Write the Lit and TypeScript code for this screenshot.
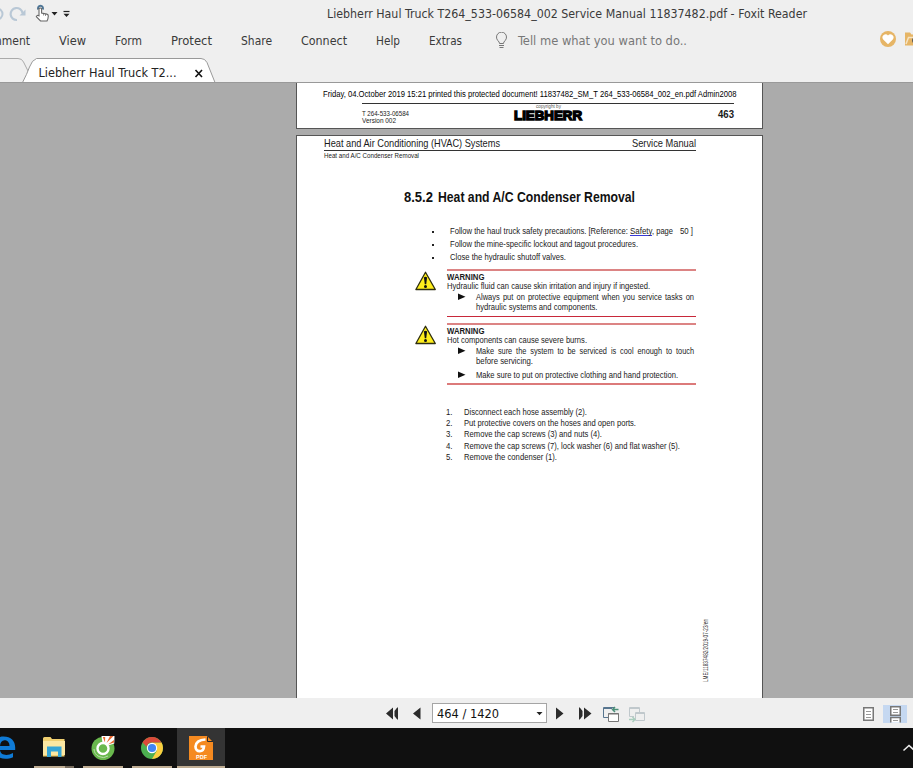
import { LitElement, html, svg, css } from "lit";
import { customElement } from "lit/decorators.js";

/** One line of text fitted to a width, with its baseline inside a box of height h. */
const line = (text: string, w: number, h: number, base: number, cls: string) => html`
  <svg class="line" width=${w} height=${h}>
    <text class=${cls} x="0" y=${base} textLength=${w} lengthAdjust="spacingAndGlyphs">${text}</text>
  </svg>`;

const MENU: [string, number][] = [
  ["View", 27], ["Form", 27], ["Protect", 41], ["Share", 31], ["Connect", 46], ["Help", 24], ["Extras", 33],
];

const STEPS: [string, number][] = [
  ["Disconnect each hose assembly (2).", 123],
  ["Put protective covers on the hoses and open ports.", 172],
  ["Remove the cap screws (3) and nuts (4).", 138],
  ["Remove the cap screws (7), lock washer (6) and flat washer (5).", 216],
  ["Remove the condenser (1).", 93],
];

const sheet = (stroke: string) => svg`
  <path d="M.75 .75h9.5v12.5H.75z" fill="#fff" stroke=${stroke} stroke-width="1.5"/>
  <path d="M3 4.500h5M3 7.500h5M3 10.500h5" stroke="#999" stroke-width="1"/>`;

@customElement("app-ribbon")
class AppRibbon extends LitElement {
  static styles = css`
    :host { display: flex; flex-direction: column; height: 82px; background: #efefef; overflow: hidden; }
    .line { display: block; overflow: visible; flex: none; }
    text { font-family: "DejaVu Sans Condensed", "DejaVu Sans", sans-serif; font-stretch: condensed; font-size: 12.2px; fill: #3a3a3a; }
    .hint { fill: #777; }
    .tabtext { fill: #222; }
    .title { display: flex; height: 27px; }
    .quick { width: 327px; display: block; flex: none; }
    .menu { display: flex; height: 31px; }
    .comment { width: 59px; display: flex; justify-content: flex-end; padding-right: 29px; box-sizing: border-box; flex: none; }
    .items { display: flex; gap: 29px; }
    .bulb { margin: 5px 10px 0 33px; flex: none; }
    .badges { margin-left: auto; flex: none; }
    .tabs { display: flex; height: 24px; background: none; }
    .tabs svg { display: block; }
  `;
  render() {
    return html`
      <div class="title">
        <svg class="quick" width="327" height="27" fill="none">
          <path d="M-3 8.500a5 5 0 0 1 0 11" stroke="#b9c8d6" stroke-width="2"/>
          <path d="M17 20a6 6 0 1 1 5.500-7" stroke="#b9c8d6" stroke-width="2.200"/>
          <path d="M25.500 9.500v6h-6z" fill="#b9c8d6"/>
          <path d="M38.300 9.500a2.500 2.500 0 1 1 4.400 0" stroke="#4f7595" stroke-width="2"/>
          <path d="M39 15.800V8.700q1.300-1.500 2.600 0V13l5.200 1.100q1.500.4 1.500 1.900-.1 2.800-1.300 5H40.500l-4.200-4.400q.8-1.900 2.700-.8z" fill="#fff" stroke="#666" stroke-width="1.100"/>
          <path d="M43.500 13.500v2M45.500 14v2" stroke="#666" stroke-width=".7"/>
          <path d="M51.500 12h6l-3 3.400zM63.500 13.700h6l-3 3.300z" fill="#222"/>
          <path d="M63.500 11.500h6" stroke="#222" stroke-width="1.200"/>
        </svg>
        ${line("Liebherr Haul Truck T264_533-06584_002 Service Manual 11837482.pdf - Foxit Reader", 480, 27, 18, "")}
      </div>
      <div class="menu">
        <div class="comment">${line("Comment", 53, 31, 18, "")}</div>
        <div class="items">${MENU.map(([m, w]) => line(m, w, 31, 18, ""))}</div>
        <svg class="bulb" width="13" height="18" fill="none" stroke="#777">
          <path d="M4.500 11.500q0-1.500-1.700-3A5 5 0 1 1 10.200 8.500q-1.700 1.500-1.700 3zM4 13.500h5M4.500 15.500h4"/>
        </svg>
        ${line("Tell me what you want to do..", 169, 31, 18, "hint")}
        <svg class="badges" width="33" height="31">
          <circle cx="8" cy="12" r="8" fill="#e6b566"/>
          <path d="M8 17.200L3.200 12.400a2.900 2.900 0 0 1 4.800-3.800 2.900 2.900 0 0 1 4.800 3.800z" fill="#fff"/>
          <path d="M25 5.500h5l1.500 2H33v11h-8z" fill="#e6b566"/>
          <path d="M26 17l2.500-6.500H33" fill="none" stroke="#f6e3c2" stroke-width="1.500"/>
          <path d="M34 11a3 3 0 0 0 0 5" fill="none" stroke="#555" stroke-width="1.200"/>
        </svg>
      </div>
      <div class="tabs">
        <svg width="230" height="24">
          <path d="M-1 .5H18q4 0 5.500 3.500l4.500 9" fill="none" stroke="#aaa"/>
          <path d="M22.500 24.500Q27 16 29.500 9T36.500 .5H201q4 0 6 4l8 20z" fill="#fff" stroke="#999"/>
          <text class="tabtext" x="38.500" y="19" textLength="138" lengthAdjust="spacingAndGlyphs">Liebherr Haul Truck T2...</text>
          <path d="M195.500 12l6.500 7M202 12l-6.500 7" stroke="#111" stroke-width="1.600"/>
        </svg>
      </div>`;
  }
}

@customElement("warning-box")
class WarningBox extends LitElement {
  static styles = css`
    :host { display: grid; grid-template-columns: 32px 249px; }
    .sign { display: block; margin-top: 2px; }
    .body { border-top: 2px solid #dc8484; border-bottom: 1px solid #c8283a; display: flex; flex-direction: column; }
    .soft { border-bottom: 2px solid #dc7a7a; }
  `;
  static properties = { soft: { type: Boolean } };
  declare soft: boolean;
  render() {
    return html`
      <svg class="sign" width="22" height="20">
        <path d="M10.500 1.200L20.300 18.500H.9z" fill="#ffee1c" stroke="#2e2e10" stroke-width="1.300" stroke-linejoin="round"/>
        <path d="M8.900 6.500q1.600-1.600 3.200 0L11.200 13.200H9.800z" fill="#111"/>
        <circle cx="10.500" cy="15.500" r="1.500" fill="#111"/>
      </svg>
      <div class="body ${this.soft ? "soft" : ""}"><slot></slot></div>`;
  }
}

@customElement("document-view")
class DocumentView extends LitElement {
  static styles = css`
    :host { display: flex; flex-direction: column; align-items: flex-start; height: 616px; overflow: hidden;
      background: #ababab; padding-left: 296px; box-sizing: border-box; border-top: 1px solid #999; }
    .line { display: block; overflow: visible; flex: none; }
    text { font-family: "Liberation Sans", Arial, sans-serif; fill: #1a1a1a; }
    .s5 { font-size: 5.500px; fill: #555; }
    .s7 { font-size: 8px; fill: #222; }
    .s8 { font-size: 8.600px; }
    .wide { word-spacing: 1.200px; }
    .wider { word-spacing: 2.200px; }
    .b8 { font-size: 8.800px; font-weight: 700; }
    .s9 { font-size: 9.200px; fill: #000; }
    .s10 { font-size: 10.700px; }
    .b10 { font-size: 10px; font-weight: 700; }
    .b13 { font-size: 14px; font-weight: 700; fill: #111; }
    .logo { font-size: 13.400px; font-weight: 700; fill: #000; stroke: #000; stroke-width: 1.400px; }
    .page { width: 467px; box-sizing: border-box; background: #fff; border: 1px solid #555; flex: none; }
    .first { height: 46px; border-top: 0; }
    .second { height: 580px; margin-top: 6px; }
    .stamp { padding-left: 25.500px; height: 20px; }
    .foot { margin-left: 65px; width: 372px; border-top: 1px solid #333; display: flex; justify-content: space-between; }
    .version { width: 152px; padding-top: 4px; box-sizing: border-box; }
    .brand { width: 68px; }
    .brand .mini { padding-left: 22px; height: 5px; }
    .number { width: 152px; display: flex; justify-content: flex-end; }
    .head { margin-left: 27px; width: 372px; height: 14px; display: flex; justify-content: space-between; border-bottom: 1px solid #333; }
    .sub { margin-left: 27px; height: 36px; }
    h1 { margin: 0 0 0 106.500px; display: flex; gap: 5.500px; height: 38px; font-size: 13px; }
    .bullets { height: 44px; padding-left: 135px; display: flex; flex-direction: column; }
    .bullet { display: flex; height: 13px; }
    .dot { width: 2px; height: 2px; background: #222; margin: 6px 16px 0 0; flex: none; }
    .link { height: 10px; margin-left: 1.500px; border-bottom: 1px solid #3a3ad8; }
    .gap { width: 6.500px; }
    .warnings { padding-left: 118px; display: flex; flex-direction: column; gap: 6px; }
    .point { display: flex; padding-left: 11px; }
    .arrow { margin-right: 10.500px; }
    .last { margin-top: 4px; }
    .steps { margin: 20.500px 0 0 149px; display: flex; flex-direction: column; }
    .step { display: flex; gap: 11.500px; height: 11.400px; }
    .imprint { display: block; margin: 156px 0 0 402.500px; }
    .tiny { font-size: 7px; fill: #333; }
  `;
  private point(rows: [string, number][], h: number[], cls = "") {
    return html`<div class="point">
      <svg class="arrow" width="7.500" height="10"><path d="M0 2.500l7.500 3.200L0 9z" fill="#111"/></svg>
      <div>${rows.map(([t, w], i) => line(t, w, h[i], 8.5, i === 0 ? "s8 " + cls : "s8"))}</div>
    </div>`;
  }
  render() {
    return html`
      <div class="page first">
        <div class="stamp">${line("Friday, 04.October 2019 15:21 printed this protected document! 11837482_SM_T 264_533-06584_002_en.pdf Admin2008", 413.5, 20, 14, "s9")}</div>
        <div class="foot">
          <div class="version">
            ${line("T 264-533-06584", 47, 7, 8, "s7")}
            ${line("Version 002", 34, 7, 8, "s7")}
          </div>
          <div class="brand">
            <div class="mini">${line("copyright by", 25, 5, 4, "s5")}</div>
            ${line("LIEBHERR", 68, 14, 10.5, "logo")}
          </div>
          <div class="number">${line("463", 16, 18, 14, "b10")}</div>
        </div>
      </div>
      <div class="page second">
        <div class="head">
          ${line("Heat and Air Conditioning (HVAC) Systems", 176, 14, 11, "s10")}
          ${line("Service Manual", 64, 14, 11.4, "s10")}
        </div>
        <div class="sub">${line("Heat and A/C Condenser Removal", 95, 12, 7, "s7")}</div>
        <h1>
          ${line("8.5.2", 29, 38, 15, "b13")}
          ${line("Heat and A/C Condenser Removal", 197, 38, 15, "b13")}
        </h1>
        <div class="bullets">
          <div class="bullet"><i class="dot"></i>
            ${line("Follow the haul truck safety precautions. [Reference:", 178, 13, 9, "s8")}
            <div class="link">${line("Safety", 22.5, 10, 9, "s8")}</div>
            ${line(", page", 21, 13, 9, "s8")}
            <span class="gap"></span>
            ${line("50 ]", 13, 13, 9, "s8")}
          </div>
          <div class="bullet"><i class="dot"></i>${line("Follow the mine-specific lockout and tagout procedures.", 188, 13, 9, "s8")}</div>
          <div class="bullet"><i class="dot"></i>${line("Close the hydraulic shutoff valves.", 116, 13, 9, "s8")}</div>
        </div>
        <div class="warnings">
          <warning-box>
            ${line("WARNING", 37.5, 10, 8.7, "b8")}
            ${line("Hydraulic fluid can cause skin irritation and injury if ingested.", 203, 10, 8.3, "s8")}
            ${this.point([["Always put on protective equipment when you service tasks on", 218], ["hydraulic systems and components.", 121.5]], [9.5, 15.5], "wide")}
          </warning-box>
          <warning-box soft>
            ${line("WARNING", 37.5, 10, 8.7, "b8")}
            ${line("Hot components can cause severe burns.", 140, 10, 8.3, "s8")}
            ${this.point([["Make sure the system to be serviced is cool enough to touch", 218], ["before servicing.", 57]], [9.5, 10], "wider")}
            <div class="last">${this.point([["Make sure to put on protective clothing and hand protection.", 202]], [14.5])}</div>
          </warning-box>
        </div>
        <div class="steps">
          ${STEPS.map(([t, w], i) => html`<div class="step">${line(`${i + 1}.`, 6.5, 11, 9, "s8")}${line(t, w, 11, 9, "s8")}</div>`)}
        </div>
        <svg class="imprint" width="10" height="66">
          <text class="tiny" transform="translate(7.500 64) rotate(-90)" textLength="63" lengthAdjust="spacingAndGlyphs">LME/11837482/2019-07-23/en</text>
        </svg>
      </div>`;
  }
}

@customElement("page-bar")
class PageBar extends LitElement {
  static styles = css`
    :host { display: flex; height: 30px; background: #efefef; align-items: flex-start; }
    svg { display: block; flex: none; }
    text { font-family: "DejaVu Sans Condensed", "DejaVu Sans", sans-serif; font-size: 12.200px; fill: #111; }
    .back { margin-left: 386px; margin-top: 9px; width: 46px; }
    .field { margin-top: 5px; width: 115px; height: 20px; box-sizing: border-box; border: 1px solid #a5a5a5; background: #fff; display: flex; justify-content: space-between; }
    .no { margin-left: 4px; }
    .forward { margin: 7px 0 0 8px; }
    .views { margin-left: auto; display: flex; padding-right: 6px; margin-top: 7px; gap: 9px; }
    .lone { margin-top: 2px; }
    .active { background: #c5d8f1; width: 24px; height: 18px; display: flex; justify-content: center; }
  `;
  render() {
    return html`
      <svg class="back" height="13" fill="#2b2b2b">
        <path d="M7 .5v12L0 6.500zM12 .5v12h-.8L8.500 9V4L11.200 .5zM34.500 .5v12L27 6.500z"/>
      </svg>
      <div class="field">
        <svg class="no" width="64" height="18"><text x="0" y="14" textLength="62" lengthAdjust="spacingAndGlyphs">464 / 1420</text></svg>
        <svg width="12" height="18"><path d="M2.500 8h6l-3 3.300z" fill="#222"/></svg>
      </div>
      <svg class="forward" width="92" height="18" fill="none">
        <path d="M1 2.500v12l7.500-6zM29 2.500v12l7.500-6zM24 2.500v12h.8L27.500 11V6L24.800 2.500z" fill="#2b2b2b"/>
        <path d="M59 2.500H48.500v10H53M48 3.500h9" stroke="#57758f"/>
        <path d="M53.500 8.500h10v8h-10zM53 9h11" stroke="#777" fill="#fff"/>
        <path d="M63.500 4.500h-6M60 2l-2.500 2.500L60 7" stroke="#4b8f78" stroke-width="1.500"/>
        <path d="M79 11.500h-4.500v-9h10V7M74 3.500h11M80.500 7.500h9v8h-9zM80 8.500h10" stroke="#c0c8cc"/>
        <path d="M74 14.500h6M77.500 12l2.500 2.500L77.500 17" stroke="#a9cdbd" stroke-width="1.400"/>
      </svg>
      <div class="views">
        <svg class="lone" width="11" height="14">${sheet("#777")}</svg>
        <div class="active">
          <svg width="11" height="18" fill="#fff" stroke="#777" stroke-width="1.500">
            <path d="M.75 1.750h9.500v8.500H.75zM.75 17.500v-5h9.500v5"/>
            <path d="M3 4.500h5M3 7.500h5M3 15.500h5" stroke="#999" stroke-width="1"/>
          </svg>
        </div>
      </div>`;
  }
}

@customElement("task-bar")
class TaskBar extends LitElement {
  static styles = css`
    :host { display: flex; height: 40px; background: #101010; overflow: hidden; }
    svg { display: block; flex: none; }
    .edge { width: 34px; }
    .app { width: 40px; height: 40px; margin-right: 9px; box-sizing: border-box; border-bottom: 2px solid #bfad93; display: flex; justify-content: center; }
    .chrome { margin-right: 5px; }
    .open { width: 48px; background: #343434; margin: 0; }
    .tray { margin-left: auto; }
    .pdf { font-family: "Liberation Sans", sans-serif; font-weight: 700; font-size: 5.500px; fill: #fff; }
  `;
  render() {
    return html`
      <svg class="edge" height="40">
        <path d="M-8 18C-7 11-2 8.500 3.500 8.500 11 8.500 15.200 13 15.200 19.500V22H0C.3 27 7 28.500 13 25v4.300C4 33 -5 30-5 21.500-5 17-2 14-1 13.500-4 14-6.500 16-8 18zM0 18H9.500C9.500 14 7 12.300 4.500 12.300 2 12.300.3 14.500 0 18z" fill="#0f7bd6" fill-rule="evenodd"/>
      </svg>
      <div class="app">
        <svg width="40" height="40">
          <path d="M9 12V10.500q0-1.500 1.500-1.500h6l1.500 2H30.500v17.500H9z" fill="#f0cf70"/>
          <path d="M9 13h22v14H9z" fill="#fbe7a2"/>
          <path d="M13 18.500h14.500V29H24v-5.500h-7V29h-4z" fill="#35a5d6"/>
          <path d="M31 38h9v2h-9z" fill="#766b5d"/>
        </svg>
      </div>
      <div class="app">
        <svg width="24" height="40">
          <circle cx="12" cy="20.500" r="11.500" fill="#69b84d"/>
          <path d="M12 19L10.500 8h13v7.500z" fill="#fff"/>
          <path d="M23.500 15.500L24 8v8z" fill="#101010"/>
          <path d="M14 14.500L11.800 9h2.400zM15.500 15l3.500-7h3.500zM17 16.500l6-4.500v2.500z" fill="#ea6930"/>
          <circle cx="12" cy="20.500" r="5.500" fill="#69b84d" stroke="#fff" stroke-width="2.400"/>
          <path d="M3 21a9 9 0 0 0 14 7" fill="none" stroke="#b9dfa9" stroke-width="1"/>
        </svg>
      </div>
      <div class="app chrome">
        <svg width="24" height="40">
          <circle cx="12" cy="20" r="11" fill="#4caf50"/>
          <path d="M12 14.500h9.500A11 11 0 0 1 12 31L16.800 22.700z" fill="#fccd3f"/>
          <path d="M2.500 14.500a11 11 0 0 1 19 0H12a5.500 5.500 0 0 0-5.300 4.200z" fill="#db4a3a"/>
          <circle cx="12" cy="20" r="5.200" fill="#fff"/><circle cx="12" cy="20" r="4.100" fill="#4285f4"/>
        </svg>
      </div>
      <div class="app open">
        <svg width="24" height="40">
          <path d="M0 8h18l6 6v18H0z" fill="#f58a20"/>
          <path d="M18.500 8.500v5H24" fill="none" stroke="#2b2b2b" stroke-width="1"/>
          <path d="M19.500 8H24v4.500z" fill="#343434"/>
          <path d="M16.500 11.500Q7 12 6.500 18.500C6.500 24.500 14.500 25 15 18.500H11.500" fill="none" stroke="#fff" stroke-width="2.700"/>
          <text class="pdf" x="7" y="30.500" textLength="11" lengthAdjust="spacingAndGlyphs">PDF</text>
        </svg>
      </div>
      <svg class="tray" width="11" height="40"><path d="M1.500 22.500L7 17.500l5.500 5" fill="none" stroke="#eee" stroke-width="1.500"/></svg>`;
  }
}

@customElement("app-root")
class AppRoot extends LitElement {
  static styles = css`
    :host { display: flex; flex-direction: column; width: 913px; height: 768px; overflow: hidden; }
  `;
  render() {
    return html`<app-ribbon></app-ribbon><document-view></document-view><page-bar></page-bar><task-bar></task-bar>`;
  }
}
